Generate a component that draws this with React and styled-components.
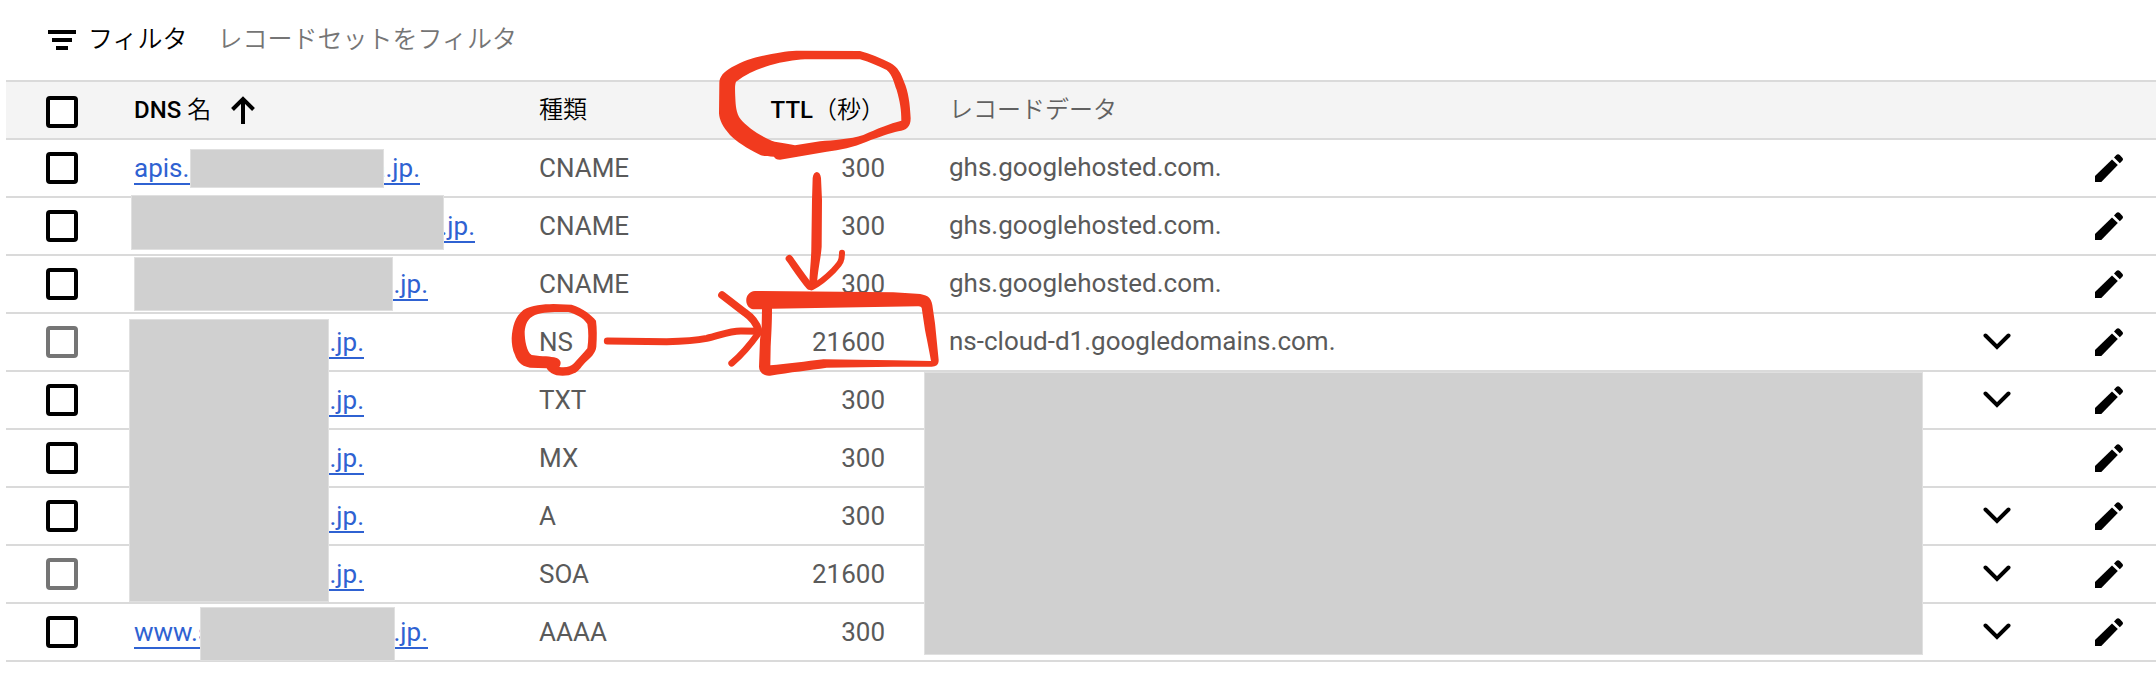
import React, { useState } from 'react';
import styled, { createGlobalStyle } from 'styled-components';

const GlobalStyle = createGlobalStyle`
  body {
    margin: 0;
    background: #fff;
    color: #000;
    font-family: Roboto, 'Noto Sans CJK JP', sans-serif;
    font-size: 26px;
    line-height: 32px;
  }
`;

const Page = styled.main`
  position: relative;
  padding-left: 6px;
`;

const FilterBar = styled.div`
  display: flex;
  align-items: center;
  height: 80px;
  padding-left: 42px;
  box-sizing: border-box;
  font-size: 25px;
  font-weight: 350;
`;

const FilterLabel = styled.label`
  display: flex;
  align-items: center;
  gap: 12px;
  margin-right: 30px;
`;

const FilterInput = styled.input`
  flex: 1;
  padding: 0;
  border: 0;
  outline: 0;
  background: transparent;
  font: inherit;

  &::placeholder {
    color: #757575;
    opacity: 1;
  }
`;

const Table = styled.table`
  width: 100%;
  table-layout: fixed;
  border-spacing: 0;
`;

const Col = styled.col`
  width: ${({ $width }) => ($width ? `${$width}px` : 'auto')};
`;

const HeaderCell = styled.th`
  height: 60px;
  box-sizing: border-box;
  padding: ${({ $check }) => ($check ? '4px 0 0 40px' : '0')};
  padding-right: ${({ $numeric }) => ($numeric ? '64px' : '0')};
  border-top: 2px solid #dadada;
  border-bottom: 2px solid #dadada;
  background: #f4f4f4;
  color: ${({ $muted }) => ($muted ? '#616161' : '#000')};
  font-size: 24px;
  font-weight: 500;
  text-align: ${({ $numeric }) => ($numeric ? 'right' : 'left')};
  white-space: nowrap;
`;

const Kanji = styled.span`
  font-weight: 350;
`;

const SortButton = styled.button`
  display: flex;
  align-items: center;
  gap: 20px;
  padding: 0;
  border: 0;
  background: transparent;
  color: inherit;
  font: inherit;
`;

const Cell = styled.td`
  height: 58px;
  box-sizing: border-box;
  padding: 0;
  padding-left: ${({ $check }) => ($check ? '40px' : '0')};
  padding-right: ${({ $numeric }) => ($numeric ? '64px' : '0')};
  padding-bottom: ${({ $data }) => ($data ? '2px' : '0')};
  border-bottom: 2px solid #dadada;
  color: #5a5a5a;
  text-align: ${({ $numeric }) => ($numeric ? 'right' : 'left')};
  white-space: nowrap;
`;

const Checkbox = styled.input`
  appearance: none;
  display: block;
  width: 32px;
  height: 32px;
  margin: 0;
  box-sizing: border-box;
  border: 4px solid #000;
  border-radius: 4px;
  background: #fff;

  &:checked {
    background: #000;
  }

  &:disabled {
    border-color: #757575;
  }
`;

const RecordLink = styled.a`
  display: inline-flex;
  justify-content: space-between;
  width: ${({ $width }) => $width}px;
  height: 31px;
  border-bottom: 2px solid #2f62d2;
  color: #2f62d2;
  text-decoration: none;
  vertical-align: middle;
`;

const IconButton = styled.button`
  display: block;
  margin: 0 auto;
  padding: 0;
  border: 0;
  background: transparent;

  svg {
    display: block;
  }
`;

const Mask = styled.div`
  position: absolute;
  top: ${({ $top }) => $top}px;
  left: ${({ $left }) => $left}px;
  right: ${({ $right }) => ($right ? `${$right}px` : 'auto')};
  width: ${({ $width }) => ($width ? `${$width}px` : 'auto')};
  height: ${({ $height }) => $height}px;
  box-sizing: border-box;
  border: 1px solid #e0e0e0;
  background: #d0d0d0;
`;

const Ink = styled.svg`
  position: absolute;
  top: 30px;
  left: 500px;
  width: 460px;
  height: 360px;
  pointer-events: none;
`;

const records = [
  { id: 1, head: 'apis.s', tail: 'a.jp.', width: 286, type: 'CNAME', ttl: 300, data: 'ghs.googlehosted.com.' },
  { id: 2, head: '', tail: '.jp.', width: 341, type: 'CNAME', ttl: 300, data: 'ghs.googlehosted.com.' },
  { id: 3, head: '', tail: '.jp.', width: 294, type: 'CNAME', ttl: 300, data: 'ghs.googlehosted.com.' },
  { id: 4, head: '', tail: 'a.jp.', width: 230, type: 'NS', ttl: 21600, data: 'ns-cloud-d1.googledomains.com.', locked: true, more: true },
  { id: 5, head: '', tail: 'a.jp.', width: 230, type: 'TXT', ttl: 300, data: '', more: true },
  { id: 6, head: '', tail: 'a.jp.', width: 230, type: 'MX', ttl: 300, data: '' },
  { id: 7, head: '', tail: 'a.jp.', width: 230, type: 'A', ttl: 300, data: '', more: true },
  { id: 8, head: '', tail: 'a.jp.', width: 230, type: 'SOA', ttl: 21600, data: '', locked: true, more: true },
  { id: 9, head: 'www.s', tail: '.jp.', width: 294, type: 'AAAA', ttl: 300, data: '', more: true },
];

const masks = [
  { top: 149, left: 190, width: 194, height: 39 },
  { top: 195, left: 131, width: 313, height: 55 },
  { top: 257, left: 134, width: 259, height: 54 },
  { top: 319, left: 129, width: 200, height: 283 },
  { top: 607, left: 200, width: 195, height: 54 },
  { top: 372, left: 924, right: 233, height: 283 },
];

const FilterIcon = () => (
  <svg width="28" height="20" viewBox="0 0 28 20" aria-hidden="true">
    <path d="M0 0h28v4H0zM4 8h20v4H4zM8 16h12v4H8z" />
  </svg>
);

const ArrowUpIcon = () => (
  <svg width="24" height="28" viewBox="0 0 24 28" aria-hidden="true">
    <path d="M12 28V3M1.5 13.5L12 3l10.500 10.500" fill="none" stroke="#000" strokeWidth="4" />
  </svg>
);

const ChevronIcon = () => (
  <svg width="28" height="18" viewBox="0 0 28 18" aria-hidden="true">
    <path d="M2.500 2.500L14 14L25.500 2.500" fill="none" stroke="#000" strokeWidth="4" strokeLinecap="round" />
  </svg>
);

const PencilIcon = () => (
  <svg width="28" height="28" viewBox="0 0 28 28" aria-hidden="true">
    <path d="M0 28V22L17 5.500L22.800 11L6.300 28Z" />
    <path d="M19 3.500L21.300 1.100Q23 -.5 24.800 1.100L27.300 3.800Q28.700 5.300 27.300 6.800L24.800 9.200Z" />
  </svg>
);

// hand-drawn notes over the TTL column
const Annotations = () => (
  <Ink viewBox="0 0 1380 1080" fill="#f13a1e" aria-hidden="true">
    <path
      fillRule="evenodd"
      d="M658 160C658 140 672 125 695 112C730 93 760 82 800 75C840 66 870 62 900 62L1080 63C1110 70 1140 84 1170 98C1195 112 1203 130 1212 155C1225 185 1230 220 1232 265C1232 290 1220 302 1195 304C1170 310 1140 320 1100 335C1060 352 1020 360 980 365L840 389C830 389 825 385 822 380C800 380 785 378 775 372C740 355 710 335 690 315C668 290 658 270 657 250Z
        M708 155C740 130 780 115 810 106C850 95 880 90 915 88L1080 88C1110 97 1135 108 1160 120C1178 135 1182 160 1190 180C1200 215 1204 240 1204 272C1170 280 1130 297 1090 315C1050 328 1000 330 960 334L885 346C865 340 840 340 815 332C780 318 740 290 722 268C708 250 707 225 706 205C705 180 704 165 708 155Z"
    />
    <g transform="translate(0 510)">
      <path d="M938 -66C940 -90 961 -90 963 -66L966 0L965 140C962 180 953 210 951 255L928 255C928 220 934 180 934 140L936 0Z" />
      <path
        fillRule="evenodd"
        d="M35 415C37 380 45 350 70 330C95 315 130 313 160 312L215 314C250 325 275 345 288 362C291 385 291 410 289 440C287 460 270 475 255 488C240 505 235 515 222 520C205 530 170 530 155 520C148 515 142 510 140 505L90 503C60 498 50 480 45 465C37 450 35 430 35 415Z
          M74 395C76 375 82 355 105 345C135 335 165 336 205 336C225 342 250 352 262 372C266 395 266 420 262 445C250 460 235 475 222 490C212 500 200 503 178 501C185 490 183 480 170 474C150 468 130 470 95 465C80 455 74 420 74 395Z"
      />
      <path
        fillRule="evenodd"
        d="M765 273L1180 277L1250 281C1280 283 1293 290 1297 315L1305 370L1316 480C1316 495 1308 500 1295 500L1180 500L980 503C930 510 870 517 810 527C790 529 777 515 777 500L780 420L785 380L786 328L765 328C730 328 730 275 765 273Z
          M816 326L1255 319C1262 319 1266 321 1266 330L1275 390C1283 430 1290 465 1293 483L1180 481L970 478C920 484 860 492 811 496L812 440C814 400 816 370 816 326Z"
      />
      <g fill="none" stroke="#f13a1e" strokeLinecap="round" strokeLinejoin="round">
        <path d="M868 176C880 192 905 230 928 258" strokeWidth="22" />
        <path d="M1026 158C1026 190 1016 192 1000 212C980 232 960 250 935 262" strokeWidth="18" />
        <path d="M322 423L500 425C550 424 590 421 620 415C660 406 690 392 725 393L772 394" strokeWidth="21" />
        <path d="M666 285L735 338C755 352 768 365 775 390" strokeWidth="23" />
        <path d="M695 490C730 460 755 428 775 400" strokeWidth="20" />
      </g>
    </g>
  </Ink>
);

const RecordRow = ({ record, checked, onToggle }) => (
  <tr>
    <Cell $check>
      <Checkbox
        type="checkbox"
        aria-label={`${record.type} を選択`}
        disabled={record.locked}
        checked={checked}
        onChange={() => onToggle(record.id)}
      />
    </Cell>
    <Cell>
      <RecordLink href="#record" $width={record.width}>
        <span>{record.head}</span>
        <span>{record.tail}</span>
      </RecordLink>
    </Cell>
    <Cell>{record.type}</Cell>
    <Cell $numeric>{record.ttl}</Cell>
    <Cell $data>{record.data}</Cell>
    <Cell>
      {record.more && (
        <IconButton type="button" aria-label="展開"><ChevronIcon /></IconButton>
      )}
    </Cell>
    <Cell>
      <IconButton type="button" aria-label="編集"><PencilIcon /></IconButton>
    </Cell>
  </tr>
);

export default function App() {
  const [selected, setSelected] = useState([]);
  const [filter, setFilter] = useState('');
  const selectable = records.filter((record) => !record.locked);
  const allSelected = selected.length === selectable.length;

  const toggle = (id) => {
    setSelected(selected.includes(id) ? selected.filter((item) => item !== id) : [...selected, id]);
  };

  const toggleAll = () => {
    setSelected(allSelected ? [] : selectable.map((record) => record.id));
  };

  return (
    <>
      <GlobalStyle />
      <Page>
        <FilterBar>
          <FilterLabel htmlFor="filter">
            <FilterIcon />
            フィルタ
          </FilterLabel>
          <FilterInput
            id="filter"
            type="text"
            placeholder="レコードセットをフィルタ"
            value={filter}
            onChange={(e) => setFilter(e.target.value)}
          />
        </FilterBar>
        <Table>
          <colgroup>
            <Col $width={128} />
            <Col $width={405} />
            <Col $width={201} />
            <Col $width={209} />
            <Col />
            <Col $width={130} />
            <Col $width={94} />
          </colgroup>
          <thead>
            <tr>
              <HeaderCell $check>
                <Checkbox type="checkbox" aria-label="すべて選択" checked={allSelected} onChange={toggleAll} />
              </HeaderCell>
              <HeaderCell>
                <SortButton type="button">
                  <span>
                    DNS <Kanji>名</Kanji>
                  </span>
                  <ArrowUpIcon />
                </SortButton>
              </HeaderCell>
              <HeaderCell><Kanji>種類</Kanji></HeaderCell>
              <HeaderCell $numeric>TTL<Kanji>（秒）</Kanji></HeaderCell>
              <HeaderCell $muted><Kanji>レコードデータ</Kanji></HeaderCell>
              <HeaderCell />
              <HeaderCell />
            </tr>
          </thead>
          <tbody>
            {records.map((record) => (
              <RecordRow
                key={record.id}
                record={record}
                checked={selected.includes(record.id)}
                onToggle={toggle}
              />
            ))}
          </tbody>
        </Table>
        {masks.map((mask) => (
          <Mask
            key={mask.top}
            $top={mask.top}
            $left={mask.left}
            $right={mask.right}
            $width={mask.width}
            $height={mask.height}
          />
        ))}
        <Annotations />
      </Page>
    </>
  );
}
